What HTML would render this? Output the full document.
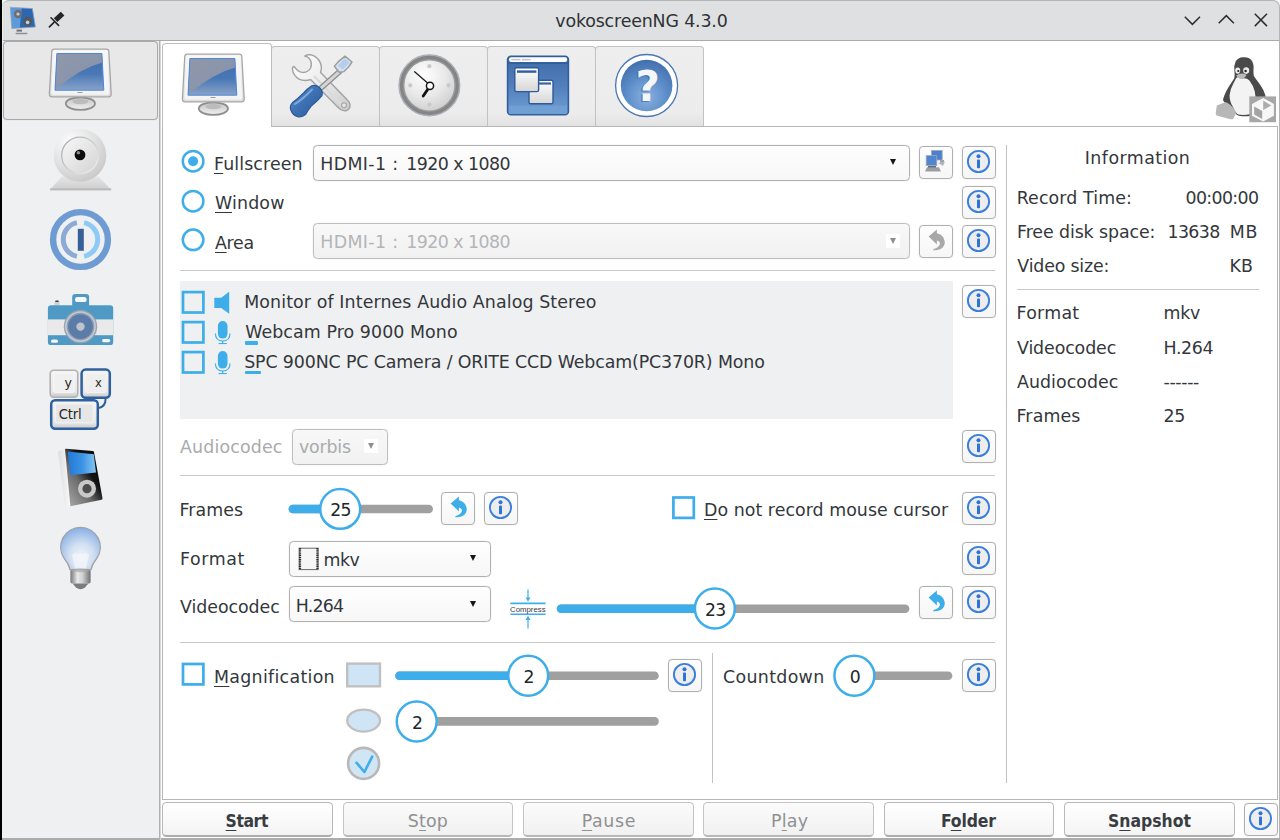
<!DOCTYPE html>
<html lang="en">
<head>
<meta charset="utf-8">
<title>vokoscreenNG 4.3.0</title>
<style>
html,body{margin:0;padding:0;}
body{width:1280px;height:840px;overflow:hidden;position:relative;background:#eff0f1;
 font-family:"DejaVu Sans","Liberation Sans",sans-serif;font-size:17.4px;color:#33373b;}
*{box-sizing:border-box;}
.abs{position:absolute;}
.t{position:absolute;white-space:nowrap;line-height:22px;height:22px;z-index:6;}
u{text-decoration:underline;text-decoration-thickness:1.3px;text-underline-offset:2.8px;}
/* window chrome */
#leftedge{left:0;top:0;width:2px;height:840px;background:#000;z-index:9;}
#corner{left:2px;top:0;width:1278px;height:10px;background:#f6f6f6;}
#titlebar{left:2px;top:0;width:1278px;height:41.4px;background:#dfe0e2;border-top:1px solid #b4b5b7;border-bottom:1.4px solid #a9aaac;border-right:1px solid #b4b5b7;border-radius:7px 7px 0 0;}
#rightedge{left:1279px;top:41px;width:1px;height:799px;background:#b4b4b4;}
#bottomedge{left:2px;top:837.6px;width:1278px;height:3px;background:#acacac;}
/* sidebar */
#sidebtn{left:2.6px;top:41.2px;width:155.6px;height:78.6px;background:#e8e8e8;border:1px solid #a9a9a9;border-radius:4px;box-shadow:0 0 1px #b8b8b8;}
#vline{left:159px;top:41px;width:2px;height:799px;background:linear-gradient(90deg,#b0b0b0 0,#b0b0b0 50%,#d6d6d6 50%);}
/* tab widget */
#white{left:161px;top:41.4px;width:1118.8px;height:797px;background:#fff;}
#pane{left:161.8px;top:125.6px;width:1116.2px;height:674.4px;background:#fff;border:1.4px solid #b6b6b6;}
.tab{position:absolute;top:46px;width:109px;height:80.4px;background:linear-gradient(#eeeeee 0,#ececec 84%,#e2e2e2 100%);border:1.3px solid #c2c2c2;border-bottom:none;border-radius:3.5px 3.5px 0 0;}
#tabsel{left:162px;top:43.4px;width:109.6px;height:84px;background:#fff;border:1.3px solid #bdbdbd;border-bottom:none;border-radius:4px 4px 0 0;}
/* widgets */
.radio{position:absolute;width:23.2px;height:23.2px;border:2.3px solid #3daee9;border-radius:50%;background:#fff;}
.radio.on:after{content:"";position:absolute;left:4.3px;top:4.3px;width:10px;height:10px;border-radius:50%;background:#3daee9;}
.chk{position:absolute;width:22.8px;height:22.8px;border:2.4px solid #3daee9;}
.combo{position:absolute;height:36px;border:1px solid #b0b0b0;border-radius:4.5px;background:linear-gradient(#fefefe,#f7f7f7);box-shadow:0 0 1px #c4c4c4;}
.combo.disabled{background:linear-gradient(#f8f8f8,#f1f1f1);border-color:#bebebe;}
.abox{position:absolute;width:14px;height:14px;background:#fff;}
.arrow{position:absolute;width:0;height:0;border-left:3.3px solid transparent;border-right:3.3px solid transparent;border-top:6.4px solid #161616;z-index:2;}
.btn{position:absolute;width:34px;height:33px;border:1px solid #b0b0b0;border-radius:4px;background:linear-gradient(#fefefe,#f6f6f6);box-shadow:0 0 1px #c4c4c4;}
.hsep{position:absolute;height:1.4px;background:#c8c8c8;}
.vsep{position:absolute;width:1.4px;background:#c2c2c2;}
.groove{position:absolute;height:8.4px;border-radius:4.2px;background:#a0a0a0;}
.groove.fill{background:#3daee9;}
.handle{position:absolute;width:41.4px;height:41.4px;border:2.2px solid #3daee9;border-radius:50%;background:#fff;text-align:center;line-height:39.6px;color:#232629;font-size:16.6px;z-index:3;}
.bbtn{position:absolute;top:801.6px;width:170.8px;height:35.6px;border:1.4px solid #b9b9b9;border-bottom:2px solid #adadad;border-radius:4.5px;background:linear-gradient(#ffffff,#f4f4f4);}
.bbtn.off{background:linear-gradient(#fbfbfb,#f1f1f1);border-color:#c4c4c4;border-bottom-color:#b8b8b8;}
svg{position:absolute;overflow:visible;}
</style>
</head>
<body>
<!-- window frame -->
<div class="abs" id="corner"></div>
<div class="abs" id="titlebar"></div>
<div class="abs" id="white"></div>
<div class="abs" id="rightedge"></div>
<div class="abs" id="bottomedge"></div>
<div class="abs" id="leftedge"></div>
<div class="abs" style="left:2px;top:7px;width:1px;height:34px;background:#ececed"></div>

<!-- sidebar -->
<div class="abs" id="sidebtn"></div>
<div class="abs" id="vline"></div>

<!-- tab widget -->
<div class="abs" id="pane"></div>
<div class="tab" style="left:270.8px"></div>
<div class="tab" style="left:378.8px"></div>
<div class="tab" style="left:486.8px"></div>
<div class="tab" style="left:594.6px"></div>
<div class="abs" id="tabsel"></div>

<!-- row: fullscreen / window / area -->
<div class="combo" style="left:313px;top:145px;width:597px"></div>
<div class="arrow" style="left:889.9px;top:159.2px"></div>
<div class="btn" style="left:919px;top:146px"></div>
<div class="btn" style="left:962px;top:146px"></div>

<div class="btn" style="left:962px;top:186px"></div>

<div class="combo disabled" style="left:313px;top:223px;width:597px"></div>
<div class="abox" style="left:885.8px;top:234.2px"></div>
<div class="arrow" style="left:889.9px;top:238px;border-top-color:#8e8e8e"></div>
<div class="btn" style="left:919px;top:225px"></div>
<div class="btn" style="left:962px;top:225px"></div>

<div class="hsep" style="left:180px;top:269.6px;width:815.4px"></div>

<!-- audio list -->
<div class="abs" style="left:180.4px;top:281.2px;width:772.6px;height:137.6px;background:#eff0f1"></div>
<div class="abs" style="left:245px;top:340.8px;width:13.4px;height:3.8px;background:#3daee9;border-radius:1px"></div>
<div class="abs" style="left:245px;top:370.6px;width:16px;height:3.8px;background:#3daee9;border-radius:1px"></div>
<div class="btn" style="left:962px;top:285px"></div>

<div class="combo disabled" style="left:291.6px;top:428.6px;width:96.4px"></div>
<div class="abox" style="left:364.4px;top:439.2px"></div>
<div class="arrow" style="left:368.2px;top:443.2px;border-top-color:#8e8e8e"></div>
<div class="btn" style="left:962px;top:430px"></div>

<div class="hsep" style="left:180px;top:474.8px;width:815.4px"></div>

<!-- frames row -->
<div class="btn" style="left:441px;top:492px"></div>
<div class="btn" style="left:484px;top:492px"></div>
<div class="btn" style="left:962px;top:492px"></div>

<!-- format row -->
<div class="combo" style="left:288.6px;top:540.6px;width:202px"></div>
<div class="arrow" style="left:470.4px;top:555.4px"></div>
<div class="btn" style="left:962px;top:542px"></div>

<!-- videocodec row -->
<div class="combo" style="left:288.6px;top:586.4px;width:202px"></div>
<div class="arrow" style="left:470.4px;top:601.2px"></div>
<div class="btn" style="left:919px;top:586px"></div>
<div class="btn" style="left:962px;top:586px"></div>

<div class="hsep" style="left:180px;top:641.6px;width:815.4px"></div>

<!-- magnification -->
<div class="btn" style="left:668px;top:659px"></div>
<div class="vsep" style="left:712px;top:653px;height:130px"></div>
<div class="btn" style="left:962px;top:659px"></div>

<!-- info panel -->
<div class="vsep" style="left:1006px;top:145px;height:638px"></div>
<div class="hsep" style="left:1017px;top:288.6px;width:242.4px"></div>

<!-- bottom buttons -->
<div class="bbtn" style="left:162.4px"></div>
<div class="bbtn off" style="left:342.7px"></div>
<div class="bbtn off" style="left:523px"></div>
<div class="bbtn off" style="left:703.3px"></div>
<div class="bbtn" style="left:883.6px"></div>
<div class="bbtn" style="left:1063.9px"></div>
<div class="btn" style="left:1244px;top:803px"></div>

<div class="t" style="left:214.0px;top:153.0px;letter-spacing:0.111px;"><u>F</u>ullscreen</div>
<div class="t" style="left:215.0px;top:192.4px;letter-spacing:0.160px;"><u>W</u>indow</div>
<div class="t" style="left:215.0px;top:231.5px;letter-spacing:-0.333px;"><u>A</u>rea</div>
<div class="t" style="left:320.3px;top:152.8px;letter-spacing:0.343px;">HDMI-1 :</div>
<div class="t" style="left:406.2px;top:152.8px;letter-spacing:-0.540px;">1920 x 1080</div>
<div class="t" style="left:320.3px;top:231.0px;letter-spacing:0.343px;color:#b3b5b7">HDMI-1 :</div>
<div class="t" style="left:406.2px;top:231.0px;letter-spacing:-0.540px;color:#b3b5b7">1920 x 1080</div>
<div class="t" style="left:244.2px;top:291.0px;letter-spacing:0.111px;">Monitor of Internes Audio Analog Stereo</div>
<div class="t" style="left:245.2px;top:320.7px;letter-spacing:0.084px;">Webcam Pro 9000 Mono</div>
<div class="t" style="left:244.2px;top:350.5px;letter-spacing:-0.128px;">SPC 900NC PC Camera / ORITE CCD Webcam(PC370R) Mono</div>
<div class="t" style="left:180.0px;top:435.7px;letter-spacing:0.156px;color:#a9abad">Audiocodec</div>
<div class="t" style="left:299.0px;top:435.7px;letter-spacing:-0.200px;color:#a9abad">vorbis</div>
<div class="t" style="left:179.5px;top:498.5px;letter-spacing:0.080px;">Frames</div>
<div class="t" style="left:180.0px;top:548.0px;letter-spacing:0.600px;">Format</div>
<div class="t" style="left:180.0px;top:596.2px;letter-spacing:-0.044px;">Videocodec</div>
<div class="t" style="left:323.6px;top:548.7px;letter-spacing:-0.600px;">mkv</div>
<div class="t" style="left:295.7px;top:594.5px;letter-spacing:-0.800px;">H.264</div>
<div class="t" style="left:704.0px;top:498.5px;letter-spacing:0.040px;"><u>D</u>o not record mouse cursor</div>
<div class="t" style="left:214.0px;top:666.3px;letter-spacing:0.300px;"><u>M</u>agnification</div>
<div class="t" style="left:723.0px;top:665.9px;letter-spacing:0.325px;">Countdown</div>
<div class="t" style="left:1084.8px;top:147.4px;letter-spacing:0.440px;">Information</div>
<div class="t" style="left:1016.7px;top:186.9px;letter-spacing:0.109px;">Record Time:</div>
<div class="t" style="left:1185.5px;top:186.9px;letter-spacing:-0.657px;">00:00:00</div>
<div class="t" style="left:1017.0px;top:220.8px;letter-spacing:-0.093px;">Free disk space:</div>
<div class="t" style="left:1167.5px;top:220.8px;letter-spacing:-0.650px;">13638</div>
<div class="t" style="left:1229.8px;top:220.8px;letter-spacing:0.700px;">MB</div>
<div class="t" style="left:1017.3px;top:255.4px;letter-spacing:-0.180px;">Video size:</div>
<div class="t" style="left:1229.4px;top:255.4px;letter-spacing:0.200px;">KB</div>
<div class="t" style="left:1016.5px;top:302.2px;letter-spacing:0.280px;">Format</div>
<div class="t" style="left:1163.5px;top:302.2px;letter-spacing:-0.300px;">mkv</div>
<div class="t" style="left:1017.0px;top:336.6px;letter-spacing:-0.111px;">Videocodec</div>
<div class="t" style="left:1163.5px;top:336.6px;letter-spacing:-0.350px;">H.264</div>
<div class="t" style="left:1017.0px;top:371.1px;letter-spacing:0.044px;">Audiocodec</div>
<div class="t" style="left:1163.5px;top:371.1px;letter-spacing:-0.360px;">------</div>
<div class="t" style="left:1016.5px;top:404.6px;letter-spacing:0.120px;">Frames</div>
<div class="t" style="left:1163.5px;top:404.6px;letter-spacing:-0.400px;">25</div>
<div class="t" style="left:555.3px;top:9.8px;letter-spacing:-0.153px;color:#2e3236">vokoscreenNG 4.3.0</div>
<div class="t" style="left:225.6px;top:809.9px;letter-spacing:-0.425px;color:#393d41;font-weight:bold;font-family:'DejaVu Sans Condensed','DejaVu Sans',sans-serif"><u>S</u>tart</div>
<div class="t" style="left:407.8px;top:809.9px;letter-spacing:0.167px;color:#8f9193">S<u>t</u>op</div>
<div class="t" style="left:581.8px;top:809.9px;letter-spacing:0.600px;color:#8f9193"><u>P</u>ause</div>
<div class="t" style="left:770.9px;top:809.9px;letter-spacing:0.267px;color:#8f9193">P<u>l</u>ay</div>
<div class="t" style="left:940.9px;top:809.9px;letter-spacing:-0.120px;color:#393d41;font-weight:bold;font-family:'DejaVu Sans Condensed','DejaVu Sans',sans-serif">F<u>o</u>lder</div>
<div class="t" style="left:1108.0px;top:809.9px;letter-spacing:0.000px;color:#393d41;font-weight:bold;font-family:'DejaVu Sans Condensed','DejaVu Sans',sans-serif">S<u>n</u>apshot</div>

<svg width="1280" height="840" viewBox="0 0 1280 840" style="left:0;top:0;pointer-events:none;z-index:5">
<defs>
 <linearGradient id="gFrame" x1="0" y1="0" x2="0" y2="1"><stop offset="0" stop-color="#f6f6f6"/><stop offset="1" stop-color="#dcdcdc"/></linearGradient>
 <linearGradient id="gScreenLo" x1="0" y1="0" x2="0" y2="1"><stop offset="0" stop-color="#3e6cab"/><stop offset="0.55" stop-color="#4a78b6"/><stop offset="1" stop-color="#88a2c8"/></linearGradient>
 <linearGradient id="gScreenHi" x1="0" y1="0" x2="1" y2="1"><stop offset="0" stop-color="#9097a8"/><stop offset="1" stop-color="#8493b0"/></linearGradient>
 <linearGradient id="gStand" x1="0" y1="0" x2="0" y2="1"><stop offset="0" stop-color="#c4c4c4"/><stop offset="1" stop-color="#f0f0f0"/></linearGradient>
 <symbol id="mon" viewBox="0 0 64 64" overflow="visible">
  <rect x="27" y="49" width="11" height="5" fill="#bdbdbd"/>
  <ellipse cx="32.4" cy="56.6" rx="14.6" ry="6.3" fill="url(#gStand)" stroke="#8e8e8e" stroke-width="1.8"/>
  <ellipse cx="32.4" cy="54.6" rx="8" ry="2.6" fill="#bcbcbc"/>
  <path d="M6.2,2.1H58.3Q60.6,2.1 60.8,4.2L63.2,46.6Q63.4,49.8 60.6,49.8H3.9Q1.2,49.8 1.4,46.6L3.8,4.2Q4,2.1 6.2,2.1Z" fill="url(#gFrame)" stroke="#a6a6a6" stroke-width="1.3"/>
  <path d="M7,3.9H57.6Q59,3.9 59.1,5.2L61.3,45.6Q61.4,47.8 59.4,47.8H5.2Q3.2,47.8 3.3,45.6L5.5,5.2Q5.6,3.9 7,3.9Z" fill="#f7f7f7" opacity="0.85"/>
  <path d="M8.9,6.5H53.9L55.8,43.2H7Z" fill="url(#gScreenLo)"/>
  <path d="M8.9,6.5H53.9L54.4,15.5Q33,21 10,40.5L7.1,42Z" fill="url(#gScreenHi)"/>
  <path d="M8.9,6.5H53.9L55.8,43.2H7Z" fill="none" stroke="#4f88d6" stroke-width="1"/>
  <rect x="29.5" y="45" width="5" height="1" fill="#9a9a9a"/>
 </symbol>
 <linearGradient id="gMetal" x1="0" y1="0" x2="1" y2="1"><stop offset="0" stop-color="#ffffff"/><stop offset="0.5" stop-color="#ececec"/><stop offset="1" stop-color="#c9c9c9"/></linearGradient>
 <linearGradient id="gHandle" x1="0" y1="0" x2="1" y2="1"><stop offset="0" stop-color="#6a9cd6"/><stop offset="0.45" stop-color="#3f73b5"/><stop offset="1" stop-color="#28579a"/></linearGradient>
 <radialGradient id="gClock" cx="0.4" cy="0.3" r="0.78"><stop offset="0" stop-color="#ffffff"/><stop offset="0.55" stop-color="#e8e8e8"/><stop offset="1" stop-color="#cccccc"/></radialGradient>
 <linearGradient id="gWin" x1="0" y1="0" x2="0" y2="1"><stop offset="0" stop-color="#3f6aa8"/><stop offset="0.5" stop-color="#527fbc"/><stop offset="1" stop-color="#6f9ed2"/></linearGradient>
 <linearGradient id="gWinW" x1="0" y1="0" x2="0" y2="1"><stop offset="0" stop-color="#ffffff"/><stop offset="1" stop-color="#d6d6d6"/></linearGradient>
 <radialGradient id="gHelp" cx="0.5" cy="0.72" r="0.8"><stop offset="0" stop-color="#8ab2e0"/><stop offset="0.5" stop-color="#5c8cc8"/><stop offset="1" stop-color="#3a68a4"/></radialGradient>
</defs>

<!-- title bar: app icon -->
<g>
 <path d="M10.2,7.2L32.4,8.6L35.4,27L11.8,28.6Z" fill="#5c9ada"/>
 <path d="M21.6,7.9L32.4,8.6L35.4,27L19.8,28Z" fill="#2c68b2"/>
 <path d="M10.2,7.2L32.4,8.6L35.4,27L11.8,28.6Z" fill="none" stroke="#9aa8b8" stroke-width="0.8"/>
 <circle cx="18" cy="14" r="4.2" fill="#6c7076"/><circle cx="18" cy="14" r="1.6" fill="#c8ccd0"/>
 <circle cx="27.6" cy="21.4" r="4.6" fill="#55595f"/><circle cx="27.6" cy="22.4" r="1.8" fill="#b8d4f0"/>
 <rect x="16.5" y="29.6" width="5.5" height="2" fill="#70747a"/>
 <rect x="15.5" y="32.8" width="12" height="1.4" rx="0.7" fill="#8c9096"/>
</g>
<!-- pin -->
<g stroke="#232629" stroke-linecap="round" fill="none">
 <path d="M62.6,13.6L55.6,20.2" stroke-width="5.2" stroke-linecap="butt"/>
 <path d="M51,17.8L58.6,25.4" stroke-width="1.6"/>
 <path d="M54,22.4L49.4,26.8" stroke-width="1.7"/>
</g>
<!-- window buttons -->
<g stroke="#2b2f33" stroke-width="1.5" fill="none" stroke-linecap="butt">
 <path d="M1184.8,16.8L1192.4,24.4L1200,16.8"/>
 <path d="M1218.7,23.2L1226.3,15.6L1233.9,23.2"/>
 <path d="M1254.8,13.8L1267,26.1M1267,13.8L1254.8,26.1"/>
</g>

<!-- monitor icons -->
<use href="#mon" x="48" y="47" width="64" height="64"/>
<use href="#mon" x="181" y="52" width="64" height="64"/>

<!-- tools icon -->
<g transform="translate(270,40)">
 <path d="M34.8,16.1Q37.5,16.3 39.4,18.6Q42.6,23 40.6,28Q38,32.8 32.4,32.4Q27.6,31.6 24.1,26.3Q22,27 22.4,29.6Q23.6,35.6 28.6,38.8Q34,41.6 40.6,39.6L69.4,68.8Q72.8,71.4 76.6,70.6Q80.4,69 80,64.6Q79.6,62 77.4,60L50.6,32.4Q52.6,26 49.4,21Q45.6,15.4 40.2,14.8Q36.6,14.6 34.8,16.1Z" fill="url(#gMetal)" stroke="#a2a2a2" stroke-width="1.4" stroke-linejoin="round"/>
 <path d="M44,36L71,64" stroke="#dadada" stroke-width="2" fill="none"/>
 <circle cx="74" cy="65.2" r="2.4" fill="#ececec" stroke="#a8a8a8" stroke-width="1.2"/>
 <path d="M70.6,30.6L50.6,48.4" stroke="#8e8e8e" stroke-width="5.6"/>
 <path d="M70.6,30.6L50.6,48.4" stroke="#d4d4d4" stroke-width="3"/>
 <path d="M75,16.1L82,22L78.6,27L74,31.6L69.2,32.2L64.4,26.3L68.4,21.6Z" fill="#d4e0f2" stroke="#9c9c9c" stroke-width="1.4" stroke-linejoin="round"/>
 <path d="M74.6,18.6L79.4,22.6L73,29.6L67.6,26Z" fill="#b7cdee"/>
 <path d="M41.8,45.8Q46,44.6 49.6,47.6Q53.4,51 52,55.6Q47.6,61 41,66.4Q37.6,70.6 35.6,74.6Q32,77.6 27.6,76.6Q22.6,75 20.8,70Q19.4,65.6 22.6,62.6Q28,58.6 33.6,53Q37.4,48.6 41.8,45.8Z" fill="url(#gHandle)" stroke="#2b5a9a" stroke-width="1.2"/>
 <path d="M25,64Q33,59 42,49.6" stroke="#8fb6e4" stroke-width="2" fill="none" stroke-linecap="round" opacity="0.8"/>
</g>

<!-- clock icon -->
<g>
 <circle cx="429.4" cy="85.4" r="30.3" fill="#858585" stroke="#a9afb6" stroke-width="1.5"/>
 <circle cx="429.4" cy="85.4" r="26.4" fill="#9c9c9c"/>
 <circle cx="429.4" cy="85.4" r="25" fill="url(#gClock)"/>
 <g fill="#c9c9c9"><circle cx="429.4" cy="66.2" r="2.1"/><circle cx="429.4" cy="104.6" r="2.1"/><circle cx="410.2" cy="85.4" r="2.1"/><circle cx="448.6" cy="85.4" r="2.1"/></g>
 <path d="M414.6,71.8L428.2,83.4" stroke="#1c1c1c" stroke-width="1.3" stroke-linecap="round"/>
 <path d="M428.4,88.4L423.2,96" stroke="#111" stroke-width="2.8" stroke-linecap="round"/>
 <circle cx="430" cy="85.8" r="3.6" fill="#fff" stroke="#161616" stroke-width="1.5"/>
</g>

<!-- windows icon -->
<g transform="translate(486,40)">
 <rect x="21.6" y="16.2" width="60.8" height="58.6" rx="3.4" fill="url(#gWin)" stroke="#335e9c" stroke-width="1.6"/>
 <rect x="23" y="65.6" width="58" height="8" fill="#71a0d4" opacity="0.9"/>
 <rect x="23" y="17.2" width="58.2" height="4.8" rx="2.2" fill="#fdfdfd"/>
 <rect x="25.4" y="18.9" width="9" height="1.5" fill="#c4c4c4"/><rect x="36" y="18.9" width="8.6" height="1.5" fill="#c4c4c4"/>
 <rect x="22.4" y="22.4" width="59.2" height="1.4" fill="#2f5a98"/>
 <rect x="43" y="40.2" width="24" height="23.6" rx="1.6" fill="url(#gWinW)" stroke="#2f5a98" stroke-width="1.4"/>
 <rect x="52" y="42.4" width="13" height="2.2" fill="#3767a8"/>
 <rect x="28.8" y="27.8" width="23.8" height="23.8" rx="1.6" fill="url(#gWinW)" stroke="#2f5a98" stroke-width="1.4"/>
 <rect x="31" y="30.4" width="19.4" height="2.4" fill="#2f5e9e"/>
</g>

<!-- help icon -->
<g>
 <circle cx="646.6" cy="85.5" r="31" fill="#fff" stroke="#4a76b2" stroke-width="1.3"/>
 <circle cx="646.6" cy="85.5" r="25.8" fill="url(#gHelp)"/>
 <text x="646.2" y="101.6" text-anchor="middle" font-family="'DejaVu Sans','Liberation Sans',sans-serif" font-weight="bold" font-size="42" fill="#355f9c" opacity="0.55">?</text>
 <text x="647.8" y="100.8" text-anchor="middle" font-family="'DejaVu Sans','Liberation Sans',sans-serif" font-weight="bold" font-size="42" fill="#f4f6f8">?</text>
</g>
<defs>
 <radialGradient id="gCam" cx="0.32" cy="0.25" r="0.85"><stop offset="0" stop-color="#fdfdfd"/><stop offset="0.5" stop-color="#e3e3e3"/><stop offset="1" stop-color="#c6c6c6"/></radialGradient>
 <linearGradient id="gCamIn" x1="0" y1="0" x2="1" y2="1"><stop offset="0" stop-color="#f8f8f8"/><stop offset="1" stop-color="#d3d3d3"/></linearGradient>
 <linearGradient id="gCamRing" x1="0" y1="0" x2="1" y2="1"><stop offset="0" stop-color="#a4a8b0"/><stop offset="0.6" stop-color="#d4d4d4"/><stop offset="1" stop-color="#f4f4f4"/></linearGradient>
 <linearGradient id="gCamBase" x1="0" y1="0" x2="0" y2="1"><stop offset="0" stop-color="#e4e4e4"/><stop offset="1" stop-color="#cecece"/></linearGradient>
 <linearGradient id="gKey" x1="0" y1="0" x2="0" y2="1"><stop offset="0" stop-color="#f4f4f4"/><stop offset="0.8" stop-color="#e6e6e6"/><stop offset="1" stop-color="#c6c6c6"/></linearGradient>
 <linearGradient id="gPlFront" x1="0" y1="1" x2="1" y2="0"><stop offset="0" stop-color="#b0b0b0"/><stop offset="0.4" stop-color="#6a6a6a"/><stop offset="0.62" stop-color="#111"/><stop offset="1" stop-color="#050505"/></linearGradient>
 <linearGradient id="gPlScr" x1="0" y1="0" x2="1" y2="0"><stop offset="0" stop-color="#2278d8"/><stop offset="0.5" stop-color="#3a92e4"/><stop offset="1" stop-color="#86c6f2"/></linearGradient>
 <linearGradient id="gPlSide" x1="0" y1="0" x2="1" y2="0"><stop offset="0" stop-color="#dcdcdc"/><stop offset="1" stop-color="#fafafa"/></linearGradient>
 <radialGradient id="gBulb" cx="0.52" cy="0.68" r="0.7"><stop offset="0" stop-color="#f0f4fa"/><stop offset="0.42" stop-color="#d2e0f2"/><stop offset="1" stop-color="#84ace4"/></radialGradient>
 <linearGradient id="gScrew" x1="0" y1="0" x2="1" y2="0"><stop offset="0" stop-color="#767676"/><stop offset="0.35" stop-color="#e8e8e8"/><stop offset="0.6" stop-color="#d0d0d0"/><stop offset="1" stop-color="#707070"/></linearGradient>
</defs>

<!-- webcam -->
<g transform="translate(20,120)">
 <path d="M41.8,56.6H78.4L91.2,69.8H30Z" fill="url(#gCamBase)"/>
 <rect x="30" y="68.4" width="61.2" height="2" fill="#b9b9b9"/>
 <circle cx="60" cy="35.4" r="26.3" fill="url(#gCam)"/>
 <circle cx="60" cy="35.4" r="18.3" fill="url(#gCamIn)" stroke="url(#gCamRing)" stroke-width="1.4"/>
 <circle cx="60" cy="34.9" r="5.4" fill="#0c0c0c"/>
 <circle cx="58.4" cy="32.8" r="1.8" fill="#8a8a8a"/>
</g>

<!-- power/shutdown style icon -->
<g transform="translate(20,195)" fill="none">
 <circle cx="60.5" cy="44.5" r="27.4" stroke="#6e9cd2" stroke-width="6.4"/>
 <path d="M56.9,27.6A17.3,17.3 0 0 0 56.9,61.4" stroke="#8caad4" stroke-width="5"/>
 <path d="M64.1,27.6A17.3,17.3 0 0 1 64.1,61.4" stroke="#8ecaf6" stroke-width="5"/>
 <rect x="57.8" y="33.8" width="6" height="22" fill="#37609a"/>
</g>

<!-- camera -->
<g transform="translate(20,280)">
 <path d="M34.4,25V22.6Q34.4,21.2 37,21.2Q39.6,21.2 39.6,22.6V25Z" fill="#d0d0d0"/>
 <rect x="35.2" y="20.6" width="3.6" height="1.4" rx="0.7" fill="#3c3c3c"/>
 <path d="M52.2,26V17Q52.2,13.9 55.2,13.9H66.1Q69.1,13.9 69.1,17V26Z" fill="#4e9ac4"/>
 <rect x="55" y="16.9" width="11.6" height="5.2" rx="2.6" fill="#f8f8f8"/>
 <rect x="27.9" y="25.2" width="65.3" height="39.9" rx="3.2" fill="#4e9ac4"/>
 <rect x="27.9" y="39.4" width="65.3" height="15.8" fill="#e9e9e9"/>
 <rect x="31" y="59.6" width="7" height="3.2" rx="1.6" fill="#f4f4f4"/>
 <rect x="82" y="59" width="8.2" height="3.2" rx="1.6" fill="#f4f4f4"/>
 <circle cx="60.5" cy="46.6" r="16.4" fill="#8e9fb6" stroke="#9aa2ae" stroke-width="0.8"/>
 <circle cx="60.5" cy="46.6" r="14.6" fill="none" stroke="#c6cad0" stroke-width="1.6"/>
 <circle cx="60.5" cy="46.6" r="12.4" fill="#5c7ca8"/>
 <circle cx="60.5" cy="46.6" r="4.2" fill="#bfc4ca"/>
</g>

<!-- keyboard shortcut icon -->
<g transform="translate(20,355)">
 <rect x="30.2" y="15.2" width="27.6" height="27" rx="3.4" fill="url(#gKey)" stroke="#b2b2b2" stroke-width="1.6"/>
 <rect x="33.6" y="18" width="20.6" height="19.4" rx="1.6" fill="#f0f0f0" stroke="#fafafa" stroke-width="0.8"/>
 <path d="M78.6,53Q85.6,52 85.6,43.6" fill="none" stroke="#2e609e" stroke-width="2"/>
 <rect x="61.6" y="14.6" width="28.2" height="28.2" rx="4" fill="url(#gKey)" stroke="#2e609e" stroke-width="2.5"/>
 <rect x="65.6" y="18.2" width="20.4" height="19.2" rx="1.6" fill="#eeeeee" stroke="#f8f8f8" stroke-width="0.8"/>
 <rect x="31.2" y="45.2" width="46.6" height="28.6" rx="4" fill="url(#gKey)" stroke="#2e609e" stroke-width="2.5"/>
 <rect x="35.6" y="49" width="37.6" height="18.8" rx="1.6" fill="#e6e6e6" stroke="#f6f6f6" stroke-width="0.8"/>
 <g font-family="'DejaVu Sans','Liberation Sans',sans-serif" fill="#262626">
  <text x="44.6" y="31.8" font-size="12.5">y</text>
  <text x="75" y="31.6" font-size="11.5">x</text>
  <text x="38.8" y="63.8" font-size="13.2" letter-spacing="-0.2">Ctrl</text>
 </g>
</g>

<!-- media player -->
<g transform="translate(20,435)">
 <path d="M38,16.4L45,13.9L50.4,71.2L45.2,74.6Z" fill="url(#gPlSide)"/>
 <path d="M45,13.9Q45.2,13.6 46.4,13.7L72.6,16Q73.8,16.1 74,17.2L82.5,63.2Q82.7,64.4 81.6,64.7L50.4,71.2Z" fill="url(#gPlFront)"/>
 <path d="M47.7,16.6L73.8,19.3L76,37.4L50.4,40.2Z" fill="url(#gPlScr)"/>
 <circle cx="67" cy="53.7" r="9" fill="#c9c9c9"/>
 <circle cx="67" cy="53.7" r="4.6" fill="#4e4e4e"/>
</g>

<!-- light bulb -->
<g transform="translate(20,515)">
 <path d="M60.5,12.4A19.7,19.7 0 0 1 76.6,43.6Q72.4,48.6 70.8,54.8H50.2Q48.6,48.6 44.4,43.6A19.7,19.7 0 0 1 60.5,12.4Z" fill="url(#gBulb)" stroke="#9ea2a8" stroke-width="1.4"/>
 <path d="M52,40Q56,36 58,40Q60.5,36.5 63,40Q65,36 69,40L66,54H55Z" fill="#f4f6fa" opacity="0.75"/>
 <rect x="50.4" y="54.8" width="20.2" height="13.6" rx="1.6" fill="url(#gScrew)"/>
 <path d="M52.6,68.4H68.4L65,72.6Q60.5,76 56,72.6Z" fill="#7c7c7c"/>
 <ellipse cx="60.5" cy="55.2" rx="9.6" ry="2" fill="#a4a4a4" opacity="0.6"/>
</g>
<!-- tux -->
<g transform="translate(1200,45)">
 <path d="M42.9,12.3Q38,12.4 35.6,16.6Q33.8,20.4 34.4,25.6Q35,30.6 34.2,33.4Q31,38 28,43Q24,50 23,54.8Q23.4,57.4 26,58L34,66Q36,70.6 40,70.9Q45,71.6 50,70.9L62,62Q66.4,56 65.4,50.4Q63.6,44.6 60,39.6Q56.6,35 53.8,31Q53.2,27 53.6,21.6Q53,15.6 49.6,13.6Q46.6,12 42.9,12.3Z" fill="#4a4a4a"/>
 <path d="M36.2,33Q39,30.6 42.6,33.4Q46.6,32.6 49.4,35.6Q53.6,41 54.8,46.6Q56.4,54 55.4,60.6Q53.6,66.6 50.6,69Q44,70.6 38.4,69.6Q35.6,68.4 33,62Q29.4,56.6 29.6,50Q30.4,43.4 33.4,38.4Q35,35.6 36.2,33Z" fill="#f3f3f3"/>
 <ellipse cx="37.7" cy="25.6" rx="2.5" ry="3.1" fill="#ededed"/><ellipse cx="46.2" cy="25.6" rx="3" ry="3.3" fill="#ededed"/>
 <circle cx="38.3" cy="26" r="1.1" fill="#222"/><circle cx="45.6" cy="26" r="1.2" fill="#222"/>
 <path d="M36.2,30.4Q41,26.8 46.6,29.8Q45,33.6 40.6,34Q37.6,33.4 36.2,30.4Z" fill="#b9b9b9"/>
 <path d="M16.8,60.4L25.2,57.2Q28,57.4 32,61.6Q35.6,65.4 35.8,67.6Q36,70 33.2,73.8Q31,75 27.6,73.6L16.6,70.4Q15.4,69.6 15.8,67.6Z" fill="#b7b7b7"/>
 <rect x="49.3" y="51.4" width="26.7" height="25.8" fill="#a7a7a7"/>
 <path d="M63.2,53L73.9,58.9V70.7L63.2,76.6L52,70.7V58.9Z" fill="#f7f7f7"/>
 <path d="M54.2,61.6L62.2,66V74L54.2,69.6Z" fill="#a3a3a3"/>
 <path d="M63.2,55.6L71.2,60.4L63.2,64.9Z" fill="#adadad"/>
</g>
<defs>
 <symbol id="info" viewBox="0 0 33 33" overflow="visible">
  <circle cx="16.5" cy="15.5" r="10.6" fill="#ededed" stroke="#3a7edb" stroke-width="1.9"/>
  <circle cx="16.5" cy="10.3" r="2" fill="#2e73d6"/>
  <rect x="15" y="13.6" width="3" height="8.6" rx="0.9" fill="#2e73d6"/>
 </symbol>
 <symbol id="undo" viewBox="0 0 34 33" overflow="visible">
  <path d="M9.6,11.4L17.9,4.6V8.3Q24.5,9.5 25.8,16.5Q26,22 21,24.3Q17.5,25.6 14.2,25.3L14.6,24Q19.5,22.5 20.8,19.5Q21.5,16.5 17.9,15.6V19.4Z" fill="currentColor"/>
 </symbol>
</defs>
<!-- info icons -->
<use href="#info" x="962" y="146" width="33" height="33"/>
<use href="#info" x="962" y="186" width="33" height="33"/>
<use href="#info" x="962" y="225" width="33" height="33"/>
<use href="#info" x="962" y="285" width="33" height="33"/>
<use href="#info" x="962" y="430" width="33" height="33"/>
<use href="#info" x="484" y="492" width="33" height="33"/>
<use href="#info" x="962" y="492" width="33" height="33"/>
<use href="#info" x="962" y="542" width="33" height="33"/>
<use href="#info" x="962" y="586" width="33" height="33"/>
<use href="#info" x="668" y="659" width="33" height="33"/>
<use href="#info" x="962" y="659" width="33" height="33"/>
<use href="#info" x="1244" y="803" width="33" height="33"/>
<use href="#undo" x="919" y="225" width="34" height="33" color="#a8a8a8"/>
<use href="#undo" x="441" y="492" width="34" height="33" color="#3daee9"/>
<use href="#undo" x="919" y="586" width="34" height="33" color="#3daee9"/>
<!-- undo icons -->
<!-- screens icon -->
<g>
 <rect x="931.6" y="150.4" width="10.6" height="9.6" fill="#4a80cc" stroke="#a2a8b2" stroke-width="0.8"/>
 <rect x="940" y="160" width="4" height="4" fill="#a0a4aa"/>
 <rect x="926.2" y="155.6" width="10.6" height="10" fill="#4f86d2" stroke="#a2a8b2" stroke-width="0.8"/>
 <path d="M927,167.2H939L941,171.6H925Z" fill="#9a9ea4"/>
 <rect x="928" y="166" width="8" height="1.6" fill="#6a6e76"/>
 <path d="M938,163L945,161.6L943,166Z" fill="#b4b8be"/>
</g>
<!-- speaker + mics -->
<g fill="#3daee9">
 <path d="M214.3,297.8H221.2L229.2,291.8V313.8L221.2,308H214.3Z"/>
 <rect x="217.9" y="321" width="9.6" height="17.6" rx="4.8"/>
 <path d="M215.4,333.6Q215.4,341 222.7,341Q230,341 230,333.6" fill="none" stroke="#3daee9" stroke-width="1.1"/>
 <rect x="222.1" y="341" width="1.2" height="2.4"/><rect x="218.6" y="343" width="8.2" height="1.1"/>
 <rect x="217.9" y="351" width="9.6" height="17.6" rx="4.8"/>
 <path d="M215.4,363.6Q215.4,371 222.7,371Q230,371 230,363.6" fill="none" stroke="#3daee9" stroke-width="1.1"/>
 <rect x="222.1" y="371" width="1.2" height="2.4"/><rect x="218.6" y="373" width="8.2" height="1.1"/>
</g>
<!-- film icon in format combo -->
<g>
 <rect x="299.2" y="548.2" width="18.8" height="21.4" fill="#f6f6f6" stroke="#6a6a6a" stroke-width="1"/>
 <path d="M300,548V570M317.4,548V570" stroke="#2e2e2e" stroke-width="2.2" stroke-dasharray="1.4 0.8"/>
</g>
<!-- compress icon -->
<g stroke="#3daee9" fill="#3daee9">
 <path d="M510.4,603.4H545.6M510.4,614.2H545.6" stroke-width="1.6"/>
 <path d="M528,589.6V600M528,617.6V628.4" stroke-width="1.2"/>
 <path d="M525.6,597.6H530.4L528,601.8ZM525.6,620H530.4L528,615.8Z" stroke="none"/>
</g>
<text x="527.8" y="611.6" text-anchor="middle" font-family="'Liberation Sans',sans-serif" font-size="8" fill="#3a3a3a" textLength="35.5" lengthAdjust="spacingAndGlyphs">Compress</text>
<!-- slider grooves -->
<g stroke-width="8.6" stroke-linecap="round">
 <path d="M292.9,509H428.7" stroke="#a0a0a0"/>
 <path d="M292.9,509H340.2" stroke="#3daee9"/>
 <path d="M561.1,608.7H905.1" stroke="#a0a0a0"/>
 <path d="M561.1,608.7H714.8" stroke="#3daee9"/>
 <path d="M399.5,675.8H654.5" stroke="#a0a0a0"/>
 <path d="M399.5,675.8H528.2" stroke="#3daee9"/>
 <path d="M401.3,721.4H654.5" stroke="#a0a0a0"/>
 <path d="M839.3,675.8H948.1" stroke="#a0a0a0"/>
</g>
<!-- magnifier shape icons -->
<rect x="347.2" y="663.6" width="32.8" height="22.7" fill="#cfe5f6" stroke="#c0c0c0" stroke-width="2.4"/>
<ellipse cx="363.6" cy="720.6" rx="16.4" ry="11" fill="#cfe5f6" stroke="#c0c0c0" stroke-width="2.4"/>
<circle cx="363.6" cy="763.4" r="15.5" fill="#d2e5f5" stroke="#b8b8b8" stroke-width="2.6"/>
<path d="M356.6,762.8L364.4,772L372.2,756.6" fill="none" stroke="#3daee9" stroke-width="2.6" stroke-linecap="round" stroke-linejoin="round"/>
<!-- radios, checkboxes, slider handles -->
<g fill="#fff" stroke="#3daee9" stroke-width="2.5">
 <circle cx="193.1" cy="161.2" r="10.3"/>
 <circle cx="193.1" cy="201.2" r="10.3"/>
 <circle cx="193.1" cy="239.8" r="10.3"/>
</g>
<circle cx="193.1" cy="161.2" r="5" fill="#3daee9"/>
<g fill="none" stroke="#3daee9" stroke-width="2.7">
 <rect x="183.0" y="292.1" width="20.4" height="20.4" fill="none"/>
 <rect x="183.0" y="322.1" width="20.4" height="20.4" fill="none"/>
 <rect x="183.0" y="352.1" width="20.4" height="20.4" fill="none"/>
 <rect x="673.4" y="497.5" width="20.4" height="20.4" fill="#fff"/>
 <rect x="183.0" y="664.0" width="20.4" height="20.4" fill="#fff"/>
</g>
<g fill="#fff" stroke="#3daee9" stroke-width="2.5">
 <circle cx="340.2" cy="508.9" r="19.95"/>
 <circle cx="714.85" cy="608.5" r="19.95"/>
 <circle cx="528.2" cy="675.8" r="19.95"/>
 <circle cx="416.7" cy="721.5" r="19.95"/>
 <circle cx="854.4" cy="675.8" r="19.95"/>
</g>
<g font-family="'DejaVu Sans','Liberation Sans',sans-serif" font-size="17.2" fill="#232629" text-anchor="middle" letter-spacing="-0.7">
 <text x="340.55" y="516.10">25</text>
 <text x="715.20" y="615.70">23</text>
 <text x="528.55" y="683.00">2</text>
 <text x="417.05" y="728.70">2</text>
 <text x="854.75" y="683.00">0</text>
</g>




</svg>


</body>
</html>
